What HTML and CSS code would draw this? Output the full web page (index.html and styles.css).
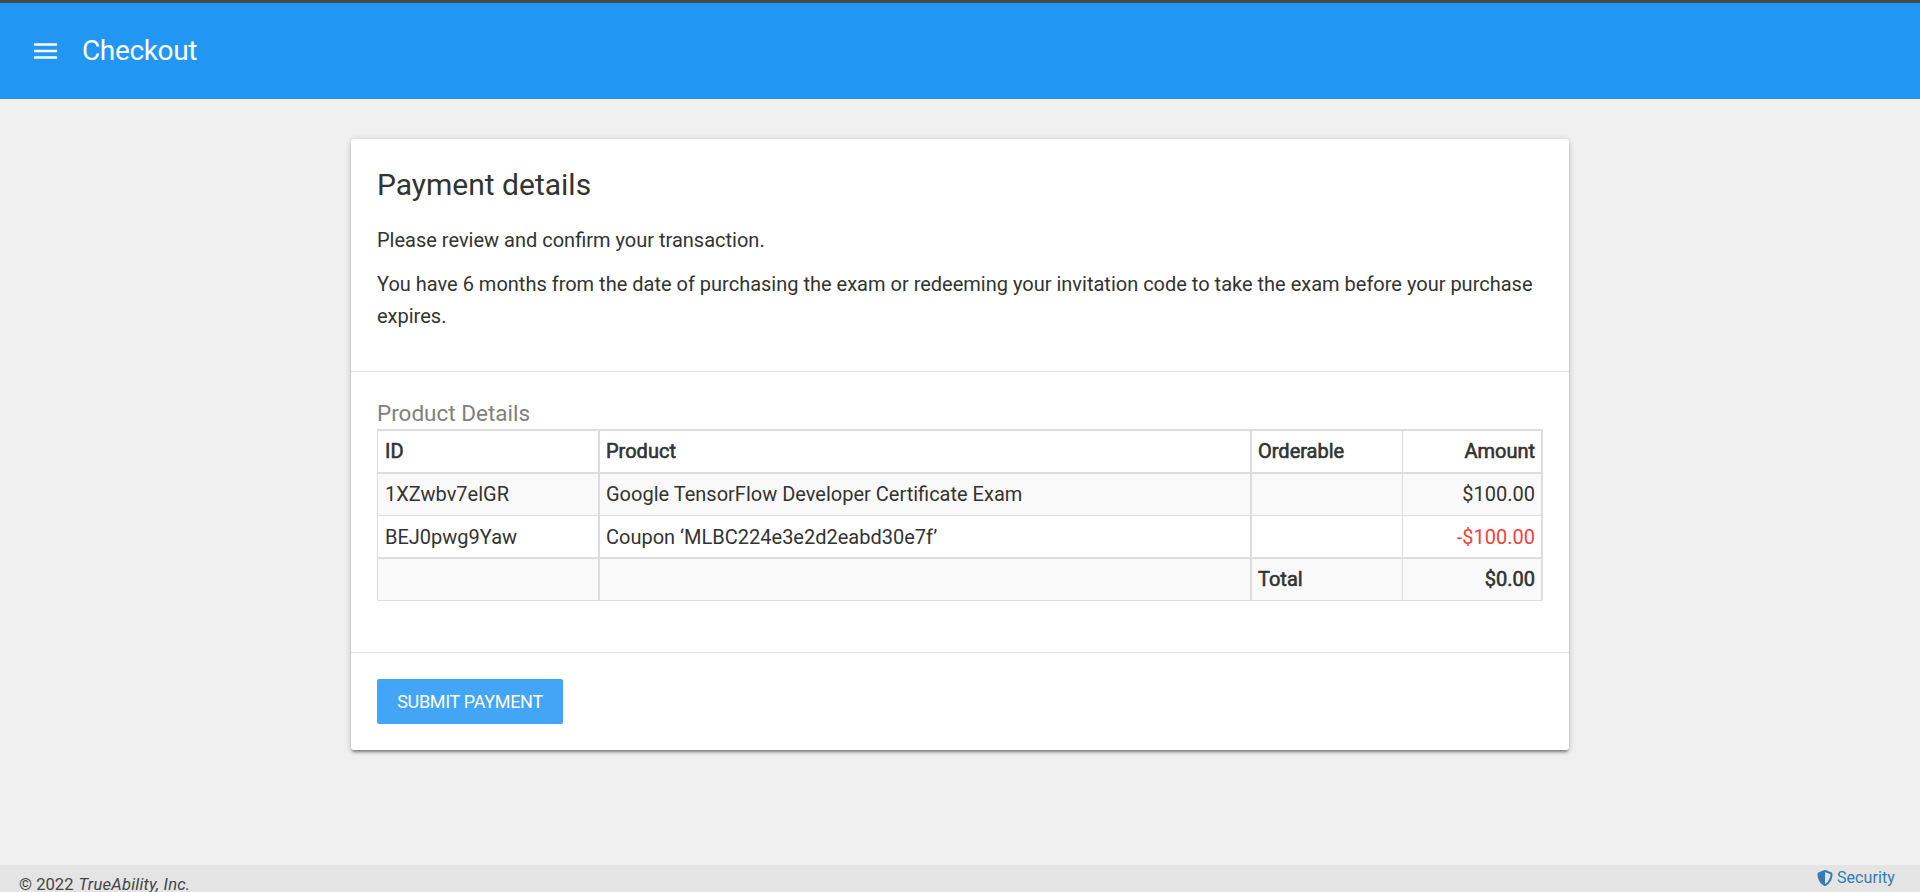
FILE: index.html
```html
<!DOCTYPE html>
<html lang="en">
<head>
<meta charset="utf-8">
<title>Checkout</title>
<link rel="stylesheet" href="styles.css">
</head>
<body>
<header class="topbar">
  <svg class="menu-icon" width="31" height="32" viewBox="0 0 24 24" fill="#fff"><path d="M3 18h18v-2H3v2zm0-5h18v-2H3v2zm0-7v2h18V6H3z"/></svg>
  <span class="page-title">Checkout</span>
</header>
<main class="content">
  <div class="card">
    <section class="intro">
      <h1>Payment details</h1>
      <p>Please review and confirm your transaction.</p>
      <p>You have 6 months from the date of purchasing the exam or redeeming your invitation code to take the exam before your purchase expires.</p>
    </section>
    <section class="products">
      <h2>Product Details</h2>
      <table class="items">
        <colgroup><col class="col-id"><col class="col-product"><col class="col-orderable"><col class="col-amount"></colgroup>
        <thead>
          <tr><th>ID</th><th>Product</th><th>Orderable</th><th>Amount</th></tr>
        </thead>
        <tbody>
          <tr class="striped"><td>1XZwbv7elGR</td><td>Google TensorFlow Developer Certificate Exam</td><td></td><td>$100.00</td></tr>
          <tr class="last"><td>BEJ0pwg9Yaw</td><td>Coupon ‘MLBC224e3e2d2eabd30e7f’</td><td></td><td class="negative">-$100.00</td></tr>
        </tbody>
        <tfoot>
          <tr class="striped"><th></th><th></th><th>Total</th><th>$0.00</th></tr>
        </tfoot>
      </table>
    </section>
    <section class="actions">
      <button class="submit" type="button">SUBMIT PAYMENT</button>
    </section>
  </div>
</main>
<footer class="footer">
  <div class="copyright">© 2022 <em>TrueAbility, Inc.</em></div>
  <a class="security"><svg width="16" height="16" viewBox="0 0 512 512" fill="#337ab7"><path d="M466.5 83.7l-192-80a48.15 48.15 0 0 0-36.9 0l-192 80C27.7 91.1 16 108.600 16 128c0 198.500 114.500 335.700 221.500 380.300 11.800 4.900 25.100 4.900 36.900 0C360.100 472.600 496 349.300 496 128c0-19.400-11.700-36.900-29.500-44.300zM256.100 446.300l-.1-381 175.900 73.300c-3.300 151.400-82.100 261.100-175.800 307.700z"/></svg><span>Security</span></a>
</footer>
</body>
</html>
```
FILE: styles.css
```css
* { box-sizing: border-box; }
body {
  margin: 0;
  height: 892px;
  overflow: hidden;
  display: flex;
  flex-direction: column;
  background: #f0f0f0;
  color: #333;
  font-family: Roboto, sans-serif;
  font-size: 20px;
  line-height: 32px;
}
h1, h2, p { margin: 0; font-weight: 400; }
.topbar {
  flex: none;
  height: 99px;
  padding: 0 30px;
  display: flex;
  align-items: center;
  gap: 21px;
  background: #2196f3;
  border-top: 3px solid #46494c;
  color: #fff;
}
.page-title { font-size: 28px; letter-spacing: -0.35px; }
.content { flex: 1; padding-top: 40px; }
.card {
  width: 1218px;
  height: 611px;
  margin: 0 auto;
  background: #fff;
  border-radius: 3px;
  box-shadow: 0 3px 3px -1px rgba(0, 0, 0, .4), 0 1px 6px rgba(0, 0, 0, .2);
}
.intro {
  height: 233px;
  padding: 26px 26px 0;
  border-bottom: 1px solid #e0e0e0;
}
.intro h1 { font-size: 30px; line-height: 40px; margin-bottom: 19px; }
.intro p { margin-bottom: 12px; }
.products { height: 281px; padding: 25px 26px 0; border-bottom: 1px solid #e0e0e0; }
.products h2 { height: 32px; font-size: 22.5px; color: #808080; }
.items {
  width: 1166px;
  table-layout: fixed;
  border-spacing: 0;
  line-height: 26px;
}
.col-id { width: 223px; }
.col-product { width: 652px; }
.col-orderable { width: 151px; }
.col-amount { width: 140px; }
.items th, .items td {
  height: 42px;
  padding: 0 6px 1px;
  text-align: left;
  white-space: nowrap;
  border: solid #ddd;
  border-width: 0 2px 1px 0;
}
.items th { font-weight: 400; -webkit-text-stroke: .6px #333; }
.items thead th { height: 45px; border-top-width: 2px; border-bottom-width: 2px; }
.items .last td { height: 43px; padding-bottom: 0; border-bottom-width: 2px; }
.items tr > :first-child { border-left-width: 1px; padding-left: 7px; }
.items tr > :nth-child(3) { border-right-width: 1px; }
.items tr > :last-child { text-align: right; }
.items .striped { background: #f9f9f9; }
.items .negative { color: #f44336; }
.actions { padding: 26px; }
.submit {
  display: block;
  width: 186px;
  height: 45px;
  padding: 0;
  border: 0;
  border-radius: 2px;
  background: #42a5f5;
  color: #fff;
  font: 400 18px/45px Roboto, sans-serif;
  letter-spacing: -.3px;
}
.footer {
  flex: none;
  height: 27px;
  padding: 0 25px 0 19px;
  display: flex;
  justify-content: space-between;
  background: #e4e4e4;
  font-size: 16px;
  line-height: 24px;
}
.copyright { padding-top: 8px; font-size: 16.6px; color: #444; }
.copyright em { margin-left: 1px; letter-spacing: .2px; }
.security { display: flex; align-items: center; height: 25px; gap: 4px; color: #337ab7; letter-spacing: .1px; }
```
